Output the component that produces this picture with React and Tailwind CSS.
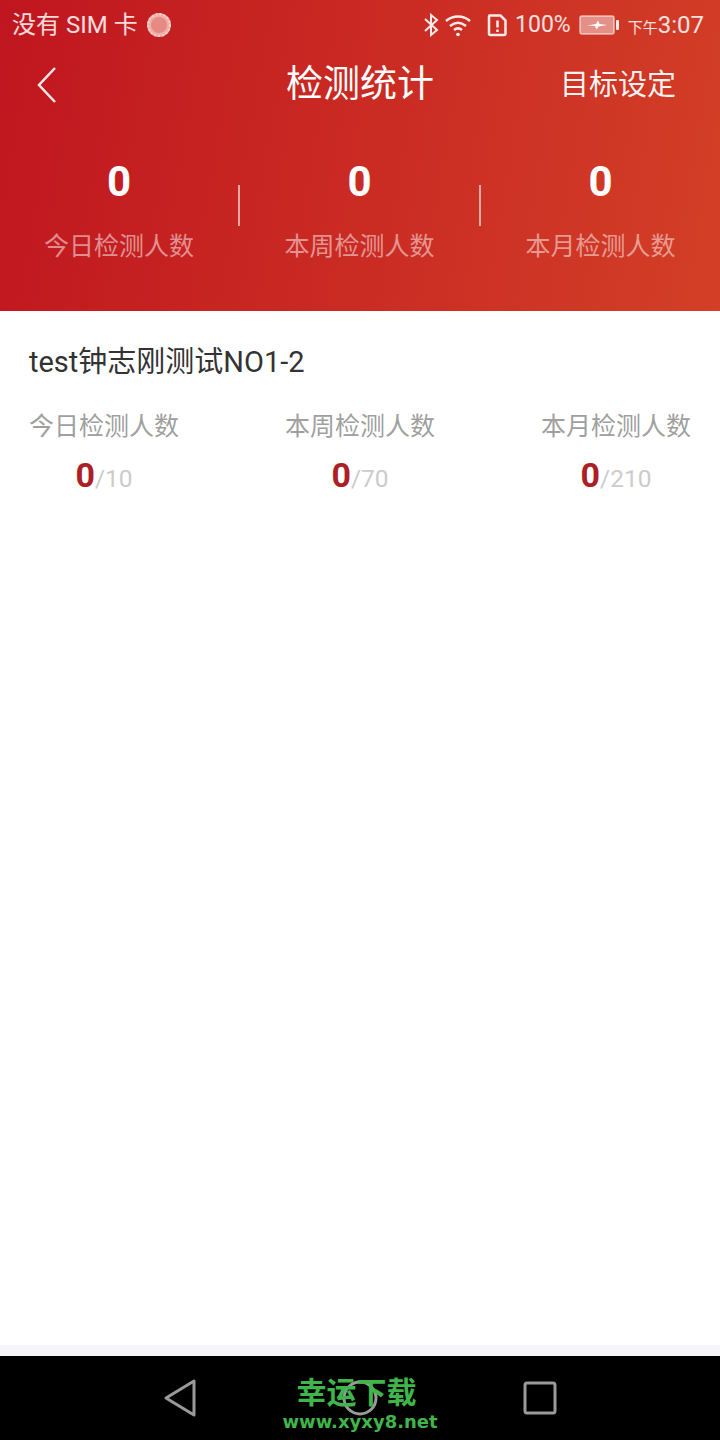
import { Fragment } from 'react';

const FONT = 'font-["Roboto","Noto_Sans_CJK_SC",sans-serif]';

const summary = [
  { label: '今日检测人数', width: 'w-[238px]' },
  { label: '本周检测人数', width: 'w-[239px]' },
  { label: '本月检测人数', width: 'w-[239px]' },
];
const targets = [
  { label: '今日检测人数', value: 10 },
  { label: '本周检测人数', value: 70 },
  { label: '本月检测人数', value: 210 },
];

const StatusBar = () => (
  <div className="flex h-[50px] items-center justify-between pl-[12px] pr-[16px] text-[24px] text-white/85">
    <div className="flex items-center gap-[8px]">
      <span>没有 SIM 卡</span>
      <svg width="26" height="26" viewBox="0 0 26 26">
        <circle cx="13" cy="13" r="12" fill="#f0b0a8" />
        <circle cx="13" cy="13" r="8" fill="#e68a84" />
        <circle cx="13" cy="13" r="11" fill="none" stroke="#fff" strokeOpacity="0.5" strokeWidth="2" strokeDasharray="2 2" />
      </svg>
    </div>
    <div className="flex items-center">
      {/* bluetooth */}
      <svg width="16" height="24" viewBox="0 0 16 24" fill="none" stroke="#fff" strokeOpacity="0.9" strokeWidth="2">
        <path d="M2 6l12 11-6 5V2l6 5L2 18" />
      </svg>
      {/* wifi */}
      <svg className="ml-[5px]" width="28" height="24" viewBox="0 0 28 24" fill="none" stroke="#fff" strokeOpacity="0.9" strokeWidth="2.5">
        <path d="M2 8c7-6 17-6 24 0" />
        <path d="M6 13c5-4 11-4 16 0" />
        <path d="M10 17c2.500-2 5.500-2 8 0" />
        <circle cx="14" cy="21.500" r="1.800" fill="#fff" stroke="none" />
      </svg>
      {/* sim alert */}
      <svg className="ml-[14px]" width="23" height="24" viewBox="0 0 23 24" fill="none" stroke="#fff" strokeOpacity="0.9" strokeWidth="2.500">
        <path d="M3.500 2.500h11l5 5v13a1.500 1.500 0 0 1-1.500 1.500H4.500A1.500 1.500 0 0 1 3 20.500V4z" />
        <path d="M11.500 7.500v7M11.500 16.500v2.500" />
      </svg>
      <span className="ml-[6px] mt-[1px] text-[23px]">100%</span>
      {/* battery */}
      <svg className="ml-[8px]" width="41" height="20" viewBox="0 0 41 20" fill="none">
        <rect x="1" y="1" width="34" height="18" rx="2" fill="#fff" fillOpacity="0.45" stroke="#fff" strokeOpacity="0.6" strokeWidth="1.500" />
        <rect x="37" y="5" width="3" height="10" rx="1" fill="#fff" fillOpacity="0.9" />
        <path d="M8 10.500l9-1.500 2-3.500 1.500 3.500 7.500 1-8.500 1.500-2 3-1.500-3.500z" fill="#fff" />
      </svg>
      <span className="ml-[8px] flex items-baseline">
        <span className="text-[15px]">下午</span>
        <span>3:07</span>
      </span>
    </div>
  </div>
);

const Header = () => (
  <div className="h-[311px] bg-[linear-gradient(100deg,#c0161f,#d33f27)] text-white">
    <StatusBar />
    <div className="flex h-[70px] items-center justify-between pl-[37px] pr-[44px]">
      <svg width="20" height="38" viewBox="0 0 20 38" fill="none" stroke="#fff" strokeOpacity="0.9" strokeWidth="2.500">
        <path d="M18 2L2 19l16 17" />
      </svg>
      <span className="mt-[2px] text-[29px] text-white/95">目标设定</span>
    </div>
    <div className="-mt-[70px] flex h-[70px] items-center justify-center text-[37px]">
      <span className="pointer-events-none">检测统计</span>
    </div>
    <div className="mt-[38px] flex items-start">
      {summary.map((s, i) => (
        <Fragment key={s.label}>
          <div className={`flex flex-col items-center ${s.width}`}>
            <span className="text-[42px] font-bold leading-[47px]">0</span>
            <span className="mt-[24px] text-[25px] leading-[36px] text-white/50">{s.label}</span>
          </div>
          {i < 2 && <div className="mt-[27px] h-[41px] w-[2px] bg-white/60" />}
        </Fragment>
      ))}
    </div>
  </div>
);

const Card = () => (
  <div className="px-[29px] pt-[31px]">
    <div className="text-[29px] leading-[40px] text-[#333333]">test钟志刚测试NO1-2</div>
    <div className="mt-[25px] flex justify-between">
      {targets.map((t) => (
        <div key={t.label} className="flex w-[150px] flex-col items-center">
          <span className="text-[25px] leading-[40px] text-[#9f9f9f]">{t.label}</span>
          <div className="mt-[9px] flex items-baseline">
            <span className="text-[34px] font-bold leading-[38px] text-[#ad1f27]">0</span>
            <span className="text-[24.500px] text-[#cccccc]">/{t.value}</span>
          </div>
        </div>
      ))}
    </div>
  </div>
);

const NavBar = () => (
  <div className="relative flex h-[84px] items-center justify-center bg-black">
    <div className="flex items-center gap-[145px]">
      <svg width="34" height="38" viewBox="0 0 34 38" fill="none" stroke="#9a9a9a" strokeWidth="3" strokeLinejoin="round">
        <path d="M31 2v34L3 19z" />
      </svg>
      <svg width="36" height="36" viewBox="0 0 36 36" fill="none" stroke="#9a9a9a" strokeWidth="3">
        <circle cx="18" cy="18" r="16" />
      </svg>
      <svg width="34" height="34" viewBox="0 0 34 34" fill="none" stroke="#9a9a9a" strokeWidth="3">
        <rect x="2" y="2" width="30" height="30" rx="2" />
      </svg>
    </div>
    {/* watermark over the nav buttons */}
    <div className="absolute left-0 right-0 top-[18px] flex flex-col items-center text-[#3fb54a]">
      <span className="-ml-[7px] text-[30px] font-bold leading-[38px]">幸运下载</span>
      <span className='-mt-[2px] font-["DejaVu_Sans",sans-serif] text-[18px] font-bold leading-[24px]'>www.xyxy8.net</span>
    </div>
  </div>
);

const App = () => {
  return (
    <div className={`flex h-[1440px] w-[720px] flex-col overflow-hidden bg-white ${FONT}`}>
      <Header />
      <div className="flex-1">
        <Card />
      </div>
      <div className="h-[11px] bg-[#f6f6fa]" />
      <NavBar />
    </div>
  );
};

export default App;
